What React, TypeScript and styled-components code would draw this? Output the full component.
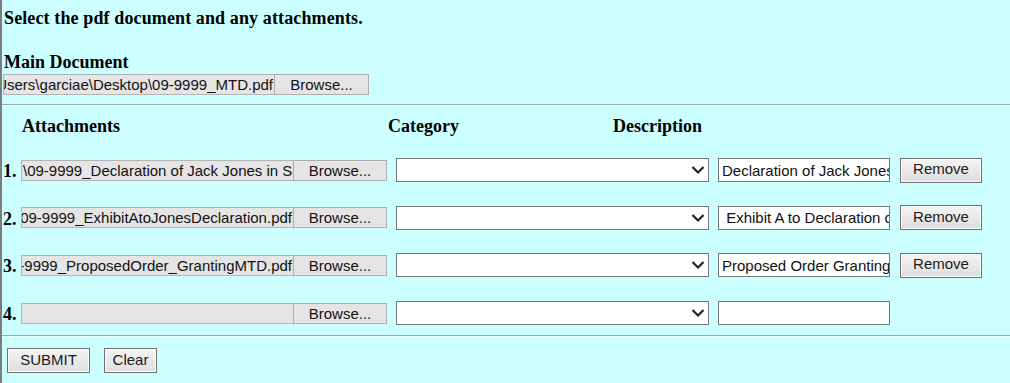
import React from "react";
import styled, { createGlobalStyle } from "styled-components";

const GlobalStyle = createGlobalStyle`
  html, body {
    margin: 0;
    padding: 0;
    background: #ccffff;
  }
  body {
    font-family: "Liberation Serif", "Times New Roman", serif;
    color: #000;
  }
`;

const Page = styled.div`
  min-height: 100vh;
  box-sizing: border-box;
  border-left: 2px solid #7d7d7d;
  background: #ccffff;
  display: flex;
  flex-direction: column;
`;

const Title = styled.div`
  font-size: 18px;
  font-weight: 700;
  line-height: 21px;
  letter-spacing: 0.12px;
  margin: 8px 0 0 2px;
`;

const Label = styled.div`
  font-size: 18px;
  font-weight: 700;
  line-height: 21px;
  margin: 23px 0 1px 2px;
`;

const FileRow = styled.div`
  display: flex;
  align-items: center;
  margin-left: 1px;
  height: 21px;
`;

const FileBox = styled.div<{ $width: number; $align?: "start" | "end" }>`
  width: ${({ $width }) => $width}px;
  height: 21px;
  box-sizing: border-box;
  background: #e5e5e5;
  border: 1px solid #b4b4b4;
  border-right: none;
  display: flex;
  align-items: center;
  justify-content: ${({ $align }) => ($align === "start" ? "flex-start" : "flex-end")};
  overflow: hidden;
  white-space: nowrap;
  font-family: "Liberation Sans", Arial, sans-serif;
  font-size: 15px;
  color: #111;
  padding: 0 1px;
`;

const BrowseButton = styled.button<{ $width: number }>`
  width: ${({ $width }) => $width}px;
  height: 21px;
  box-sizing: border-box;
  background: #e5e5e5;
  border: 1px solid #adadad;
  border-radius: 0;
  padding: 0;
  font-family: "Liberation Sans", Arial, sans-serif;
  font-size: 15px;
  color: #111;
`;

const Rule = styled.div<{ $top: number }>`
  margin-top: ${({ $top }) => $top}px;
  height: 0;
  border-top: 1px solid #a6a6a6;
  border-bottom: 1px solid #eaffff;
`;

const HeaderRow = styled.div`
  display: grid;
  grid-template-columns: 366px 225px auto;
  padding-left: 20px;
  margin-top: 10px;
  font-size: 18px;
  font-weight: 700;
  line-height: 21px;
`;

const Rows = styled.div`
  display: flex;
  flex-direction: column;
  gap: 21.7px;
  margin-top: 20px;
`;

const AttachRow = styled.div`
  display: grid;
  grid-template-columns: 19px 272px 94px 313px 172px 82px;
  align-items: center;
  height: 26px;
`;

const Num = styled.span`
  align-self: end;
  font-size: 18px;
  font-weight: 700;
  line-height: 21px;
  padding-left: 1px;
  margin-bottom: 1px;
`;

const SelectWrap = styled.div`
  position: relative;
  margin-left: 9px;
  width: 313px;
  height: 24px;
  box-sizing: border-box;
  background: #fff;
  border: 1px solid #767676;
`;

const Chevron = styled.svg`
  position: absolute;
  right: 3px;
  top: 6px;
`;

const DescInput = styled.div`
  margin-left: 18px;
  width: 172px;
  height: 24px;
  box-sizing: border-box;
  background: #fff;
  border: 1px solid #767676;
  display: flex;
  align-items: center;
  overflow: hidden;
  white-space: pre;
  font-family: "Liberation Sans", Arial, sans-serif;
  font-size: 15px;
  color: #111;
  padding: 0 3px;
`;

const GrayButton = styled.button<{ $width: number }>`
  width: ${({ $width }) => $width}px;
  height: 25px;
  box-sizing: border-box;
  background: linear-gradient(#f4f4f4, #dedede);
  border: 1px solid #707070;
  box-shadow: inset 0 0 0 1px #fcfcfc;
  border-radius: 0;
  padding: 0 0 3px;
  font-family: "Liberation Sans", Arial, sans-serif;
  font-size: 15px;
  color: #1a1a1a;
`;

const RemoveButton = styled(GrayButton)`
  margin-left: 28px;
`;

const Footer = styled.div`
  display: flex;
  gap: 14px;
  margin: 11px 0 0 5px;
`;

const attachments = [
  { file: "\\09-9999_Declaration of Jack Jones in Support of Motion.pdf", align: "start" as const, desc: "Declaration of Jack Jones in Support" },
  { file: "09-9999_ExhibitAtoJonesDeclaration.pdf", align: "end" as const, desc: " Exhibit A to Declaration of Jack Jones" },
  { file: "09-9999_ProposedOrder_GrantingMTD.pdf", align: "end" as const, desc: "Proposed Order Granting MTD" },
  { file: "", align: "end" as const, desc: "" },
];

const App: React.FC = () => {
  return (
    <>
      <GlobalStyle />
      <Page>
        <Title>Select the pdf document and any attachments.</Title>
        <Label>Main Document</Label>
        <FileRow>
          <FileBox $width={271}>C:\Users\garciae\Desktop\09-9999_MTD.pdf</FileBox>
          <BrowseButton $width={95}>Browse...</BrowseButton>
        </FileRow>

        <Rule $top={9} />

        <HeaderRow>
          <span>Attachments</span>
          <span>Category</span>
          <span>Description</span>
        </HeaderRow>

        <Rows>
          {attachments.map((a, i) => (
            <AttachRow key={i}>
              <Num>{i + 1}.</Num>
              <FileBox $width={272} $align={a.align}>
                {a.file}
              </FileBox>
              <BrowseButton $width={94}>Browse...</BrowseButton>
              <SelectWrap>
                <Chevron width="14" height="10" viewBox="0 0 14 10">
                  <path d="M1.5 2 L7 7.5 L12.5 2" fill="none" stroke="#222" strokeWidth="2.2" />
                </Chevron>
              </SelectWrap>
              <DescInput>{a.desc}</DescInput>
              {a.file ? <RemoveButton $width={82}>Remove</RemoveButton> : <span />}
            </AttachRow>
          ))}
        </Rows>

        <Rule $top={9} />

        <Footer>
          <GrayButton $width={83}>SUBMIT</GrayButton>
          <GrayButton $width={53}>Clear</GrayButton>
        </Footer>
      </Page>
    </>
  );
};

export default App;
